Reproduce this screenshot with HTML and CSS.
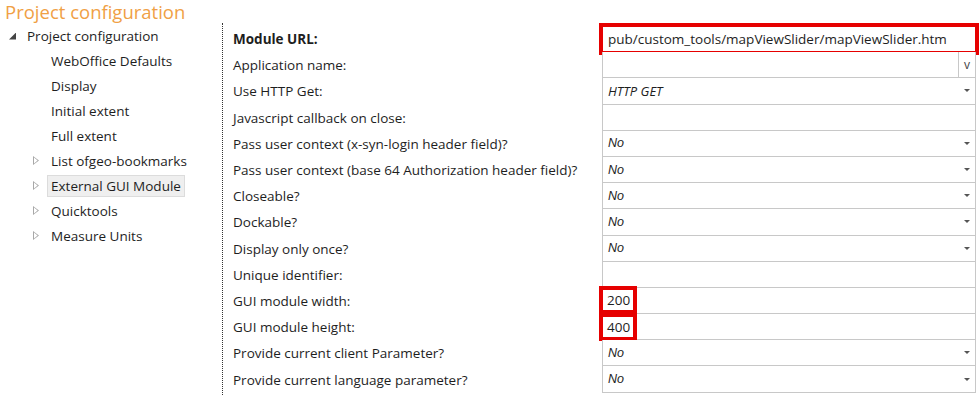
FILE: index.html
```html
<!DOCTYPE html>
<html lang="en">
<head>
    <meta charset="UTF-8">
    <title>Project configuration</title>
    <link rel="stylesheet" href="styles.css">
</head>
<body>
    <h1 class="page-title">Project configuration</h1>

    <div class="layout">
        <!-- Navigation tree -->
        <ul class="tree">
            <li class="node root"><span class="exp open"></span>Project configuration</li>
            <li class="node child"><span class="exp"></span>WebOffice Defaults</li>
            <li class="node child"><span class="exp"></span>Display</li>
            <li class="node child"><span class="exp"></span>Initial extent</li>
            <li class="node child"><span class="exp"></span>Full extent</li>
            <li class="node child"><span class="exp closed"></span>List ofgeo-bookmarks</li>
            <li class="node child"><span class="exp closed"></span><span class="selected">External GUI Module</span></li>
            <li class="node child"><span class="exp closed"></span>Quicktools</li>
            <li class="node child"><span class="exp closed"></span>Measure Units</li>
        </ul>

        <!-- Property grid -->
        <div class="props">
            <div class="label bold">Module URL:</div>
            <div class="field marked"><span class="value">pub/custom_tools/mapViewSlider/mapViewSlider.htm</span></div>

            <div class="label">Application name:</div>
            <div class="field"><span class="value"></span><span class="vbtn">v</span></div>

            <div class="label">Use HTTP Get:</div>
            <div class="field drop"><span class="value it">HTTP GET</span><span class="arrow"></span></div>

            <div class="label">Javascript callback on close:</div>
            <div class="field"><span class="value"></span></div>

            <div class="label">Pass user context (x-syn-login header field)?</div>
            <div class="field drop"><span class="value no">No</span><span class="arrow"></span></div>

            <div class="label">Pass user context (base 64 Authorization header field)?</div>
            <div class="field drop"><span class="value no">No</span><span class="arrow"></span></div>

            <div class="label">Closeable?</div>
            <div class="field drop"><span class="value no">No</span><span class="arrow"></span></div>

            <div class="label">Dockable?</div>
            <div class="field drop"><span class="value no">No</span><span class="arrow"></span></div>

            <div class="label">Display only once?</div>
            <div class="field drop"><span class="value no">No</span><span class="arrow"></span></div>

            <div class="label">Unique identifier:</div>
            <div class="field"><span class="value"></span></div>

            <div class="label">GUI module width:</div>
            <div class="field"><span class="value boxed">200</span></div>

            <div class="label">GUI module height:</div>
            <div class="field"><span class="value boxed">400</span></div>

            <div class="label">Provide current client Parameter?</div>
            <div class="field drop"><span class="value no">No</span><span class="arrow"></span></div>

            <div class="label">Provide current language parameter?</div>
            <div class="field drop"><span class="value no">No</span><span class="arrow"></span></div>
        </div>
    </div>
</body>
</html>
```

FILE: styles.css
```css
body {
    margin: 0;
    background-color: #fff;
    font-family: "Open Sans", "Noto Sans", sans-serif;
    font-size: 13.5px;
    color: #1e1e1e;
    width: 980px;
    height: 396px;
    overflow: hidden;
}

.page-title {
    margin: 0;
    padding: 0 0 0 5px;
    height: 23px;
    font-size: 18.5px;
    font-weight: normal;
    line-height: 24px;
    color: #f0a045;
}

.layout {
    display: flex;
}

/* tree */
.tree {
    list-style: none;
    margin: 0;
    padding: 0;
    width: 222px;
    flex: none;
}

.node {
    display: flex;
    align-items: center;
    height: 25px;
}

.root {
    padding-left: 9px;
}

.child {
    padding-left: 33px;
}

.exp {
    width: 18px;
    height: 8px;
    flex: none;
}

.exp.open {
    width: 7px;
    height: 7px;
    margin-right: 11px;
    margin-top: 1px;
    background: #444;
    clip-path: polygon(100% 0, 100% 100%, 0 100%);
}

.exp.closed {
    width: 6px;
    height: 9px;
    margin-right: 12px;
    background: #a8a8a8;
    clip-path: polygon(0 0, 100% 50%, 0 100%, 0 0, 1px 1.6px, 1px 7.4px, 4.6px 4.5px, 1px 1.6px);
}

.selected {
    margin-left: -4px;
    padding: 1px 3px;
    background-color: #efefef;
    border: 1px solid #dcdcdc;
}

/* property grid */
.props {
    flex: 1;
    display: grid;
    grid-template-columns: 379px 374px;
    grid-auto-rows: 26.2px;
    padding: 3px 0 4px 0;
    border-left: 1px dotted #333;
}

.label {
    display: flex;
    align-items: center;
    padding-left: 10px;
    white-space: nowrap;
}

.bold {
    font-weight: bold;
}

.field {
    display: flex;
    align-items: center;
    border: 1px solid #c8c8c8;
    border-top: none;
    background: #fff;
}

.field:nth-child(2) {
    border-top: 1px solid #c8c8c8;
}

.value {
    flex: 1;
    padding-left: 5px;
}

.it {
    font-style: italic;
    font-size: 13px;
}

.no {
    font-family: "Liberation Sans", Arial, sans-serif;
    font-style: italic;
    font-size: 12.5px;
}

.vbtn {
    width: 16px;
    align-self: stretch;
    display: flex;
    align-items: center;
    justify-content: center;
    border-left: 1px solid #c8c8c8;
    color: #444;
    font-size: 12px;
}

.arrow {
    width: 0;
    height: 0;
    margin-right: 5px;
    border-left: 3px solid transparent;
    border-right: 3px solid transparent;
    border-top: 3px solid #555;
}

/* red annotation boxes */
.marked {
    outline: 4px solid #e60000;
    outline-offset: -1px;
}

.boxed {
    flex: none;
    margin-left: -4px;
    padding: 1px 3px 1px 4px;
    border: 4px solid #e60000;
}
```
